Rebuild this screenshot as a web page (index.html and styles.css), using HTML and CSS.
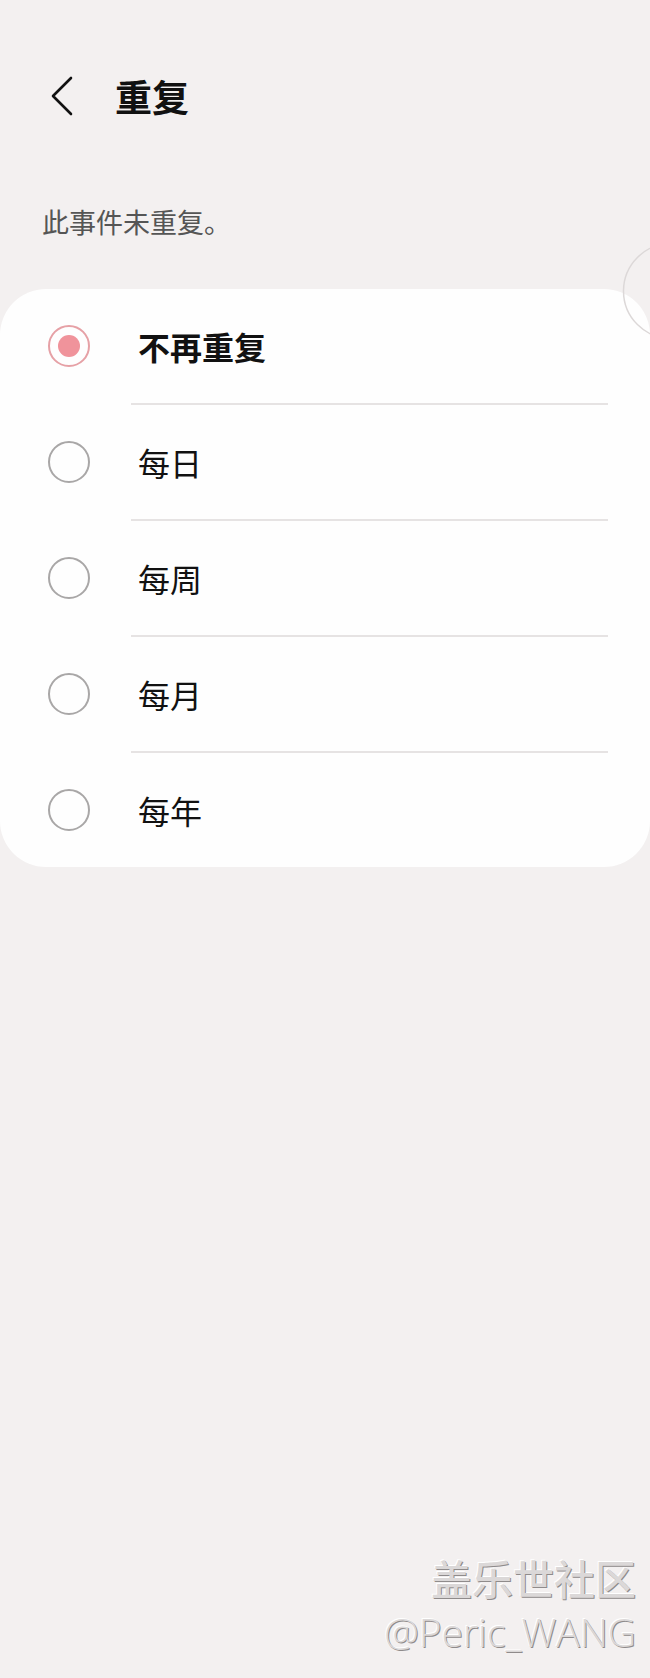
FILE: index.html
```html
<!DOCTYPE html>
<html lang="zh-CN">
<head>
    <meta charset="UTF-8">
    <meta name="viewport" content="width=device-width, initial-scale=1.0">
    <title>重复</title>
    <link rel="stylesheet" href="styles.css">
</head>
<body>

<div class="topbar">
    <svg class="back" width="26" height="40" viewBox="0 0 26 40">
        <polyline points="22,2 4,20 22,38" fill="none" stroke="#111" stroke-width="2.6" stroke-linecap="round" stroke-linejoin="round"/>
    </svg>
    <h1 class="title">重复</h1>
</div>

<p class="hint">此事件未重复。</p>

<div class="card">
    <div class="row">
        <span class="radio checked"></span>
        <span class="label bold">不再重复</span>
    </div>
    <div class="divider"></div>
    <div class="row">
        <span class="radio"></span>
        <span class="label">每日</span>
    </div>
    <div class="divider"></div>
    <div class="row">
        <span class="radio"></span>
        <span class="label">每周</span>
    </div>
    <div class="divider"></div>
    <div class="row">
        <span class="radio"></span>
        <span class="label">每月</span>
    </div>
    <div class="divider"></div>
    <div class="row">
        <span class="radio"></span>
        <span class="label">每年</span>
    </div>
</div>

<!-- fast scroll handle, only its left part is on screen -->
<svg class="scroller" width="28" height="98" viewBox="0 0 28 98">
    <circle cx="49" cy="49" r="47.5" fill="none" stroke="#dcd8d8" stroke-width="1.5"/>
</svg>

<div class="watermark">
    <div class="wm-cn">盖乐世社区</div>
    <div class="wm-en">@Peric_WANG</div>
</div>

</body>
</html>
```

FILE: styles.css
```css
/* page */
html,
body {
    margin: 0;
    padding: 0;
}

body {
    position: relative;
    min-height: 1678px;
    overflow: hidden;
    background-color: #f3f0f0;
    font-family: "Noto Sans CJK SC", "Noto Sans", sans-serif;
    color: #111;
}

.topbar {
    display: flex;
    align-items: center;
    height: 60px;
    margin-top: 66px;
    padding-left: 49px;
}

.back {
    display: block;
}

.title {
    margin: 0 0 0 40px;
    font-size: 37px;
    font-weight: 700;
    line-height: 60px;
}

.hint {
    margin: 78px 0 0 42px;
    font-size: 27px;
    line-height: 36px;
    color: #555;
}

.card {
    margin-top: 49px;
    background-color: #fefefe;
    border-radius: 46px;
}

.row {
    display: flex;
    align-items: center;
    height: 114px;
    padding-left: 48px;
}

.radio {
    box-sizing: border-box;
    flex: none;
    width: 42px;
    height: 42px;
    border: 2px solid #a9a7a7;
    border-radius: 50%;
}

.radio.checked {
    display: flex;
    align-items: center;
    justify-content: center;
    border-color: #e6a1a6;
}

.radio.checked::after {
    content: "";
    width: 22px;
    height: 22px;
    border-radius: 50%;
    background-color: #f0939b;
}

.label {
    margin-left: 48px;
    font-size: 32px;
    line-height: 40px;
}

.label.bold {
    font-weight: 700;
}

.divider {
    height: 2px;
    margin: 0 42px 0 131px;
    background-color: #e6e3e3;
}

.scroller {
    position: absolute;
    top: 242px;
    left: 622px;
    display: block;
}

.watermark {
    position: absolute;
    top: 1548px;
    right: 14px;
    text-align: right;
    color: #dbd8d8;
    text-shadow: 1px 1px 0 #8f8b8b, -1px -1px 0 #ffffff;
}

.wm-cn {
    font-family: "Noto Sans CJK SC", sans-serif;
    font-size: 41px;
    line-height: 58px;
    font-weight: 500;
}

.wm-en {
    font-family: "Open Sans", "Noto Sans", sans-serif;
    font-size: 39px;
    line-height: 52px;
    font-weight: 300;
}
```
